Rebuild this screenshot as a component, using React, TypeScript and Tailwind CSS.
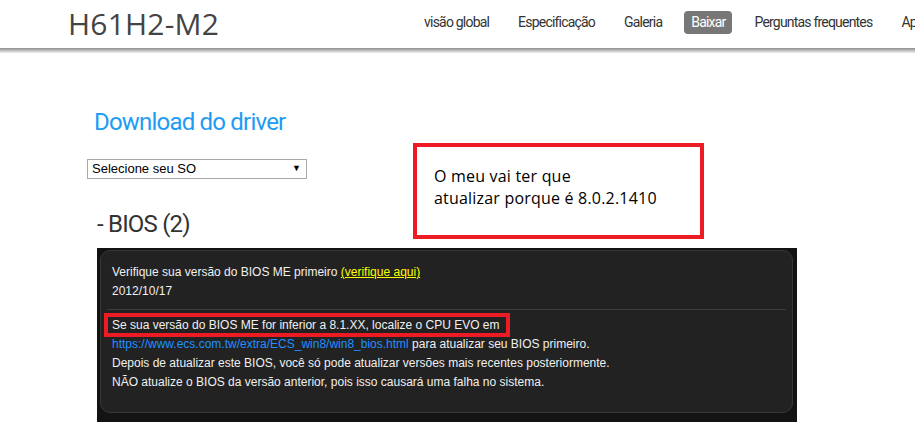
import React from "react";

const navItems = ["visão global", "Especificação", "Galeria", "Baixar", "Perguntas frequentes", "Apoio"];

export default function App() {
  return (
    <div className="relative w-[915px] h-[423px] overflow-hidden bg-white">
      {/* Header */}
      <div className="h-[48px] flex items-center bg-white overflow-hidden">
        <div className="ml-[68px] shrink-0 whitespace-nowrap text-[30px] leading-none text-[#444] tracking-[0.2px]" style={{ fontFamily: '"Open Sans", sans-serif' }}>
          H61H2-M2
        </div>
        <nav className="ml-[198px] -mt-[3px] shrink-0 flex items-center gap-[15px] whitespace-nowrap" style={{ fontFamily: 'Roboto, "Noto Sans", sans-serif' }}>
          {navItems.map((n) => (
            <span
              key={n}
              className={
                n === "Baixar"
                  ? "px-[7px] h-[23px] flex items-center rounded-[4px] bg-[#777] text-white text-[14px] tracking-[-0.8px]"
                  : "px-[7px] h-[23px] flex items-center text-[#333] text-[14px] tracking-[-0.8px]"
              }
            >
              {n}
            </span>
          ))}
        </nav>
      </div>
      <div className="h-[5px] bg-gradient-to-b from-[#8e8e8e] via-[#bdbdbd] to-[#f0f0f0]" />

      {/* Main */}
      <div className="pl-[87px]">
        <h1 className="mt-[55px] ml-[7px] text-[24px] leading-[28px] text-[#1e9cf3] tracking-[-0.8px]" style={{ fontFamily: 'Roboto, sans-serif' }}>
          Download do driver
        </h1>
        <div className="mt-[23px] w-[220px] h-[20px] border border-[#a9a9a9] flex items-center justify-between pl-[4px] pr-[5px] text-[13px] text-black" style={{ fontFamily: '"Liberation Sans", Arial, sans-serif' }}>
          <span>Selecione seu SO</span>
          <span className="text-[9px]">▼</span>
        </div>
        <h2 className="mt-[31px] ml-[10px] text-[24px] leading-[28px] text-[#333] tracking-[-0.8px]" style={{ fontFamily: 'Roboto, sans-serif' }}>
          - BIOS (2)
        </h2>

        <div className="mt-[10px] ml-[10px] w-[700px] bg-[#131313] pt-[2px] pl-[3px] pr-[4px] pb-[9px]">
          <div
            className="relative rounded-[10px] border border-[#363636] bg-[#222222] h-[163px] text-[12px] leading-[19px] text-[#f0f0f0]"
            style={{ fontFamily: '"Liberation Sans", Arial, sans-serif' }}
          >
            <div className="px-[11px] pt-[12px]">
              <div>
                Verifique sua versão do BIOS ME primeiro{" "}
                <span className="text-[#ffff00] underline">(verifique aqui)</span>
              </div>
              <div>2012/10/17</div>
            </div>
            <div className="mx-[6px] mt-[8px] border-t border-[#3c3c3c]" />
            <div className="px-[11px] pt-[6px]">
              <div>Se sua versão do BIOS ME for inferior a 8.1.XX, localize o CPU EVO em</div>
              <div>
                <span className="text-[#1e90ff]">https://www.ecs.com.tw/extra/ECS_win8/win8_bios.html</span> para atualizar seu BIOS primeiro.
              </div>
              <div>Depois de atualizar este BIOS, você só pode atualizar versões mais recentes posteriormente.</div>
              <div>NÃO atualize o BIOS da versão anterior, pois isso causará uma falha no sistema.</div>
            </div>
            {/* annotation */}
            <div className="absolute left-[3px] top-[62px] w-[406px] h-[24px] border-[4px] border-[#ed1c24]" />
          </div>
        </div>
      </div>

      {/* Annotation box */}
      <div
        className="absolute left-[413px] top-[143px] w-[291px] h-[96px] border-[4px] border-[#ed1c24] bg-white pl-[17px] pt-[18px] text-[16px] leading-[22px] font-medium text-black tracking-[0.2px]"
        style={{ fontFamily: '"Open Sans", sans-serif' }}
      >
        <div>O meu vai ter que</div>
        <div>atualizar porque é 8.0.2.1410</div>
      </div>
    </div>
  );
}
